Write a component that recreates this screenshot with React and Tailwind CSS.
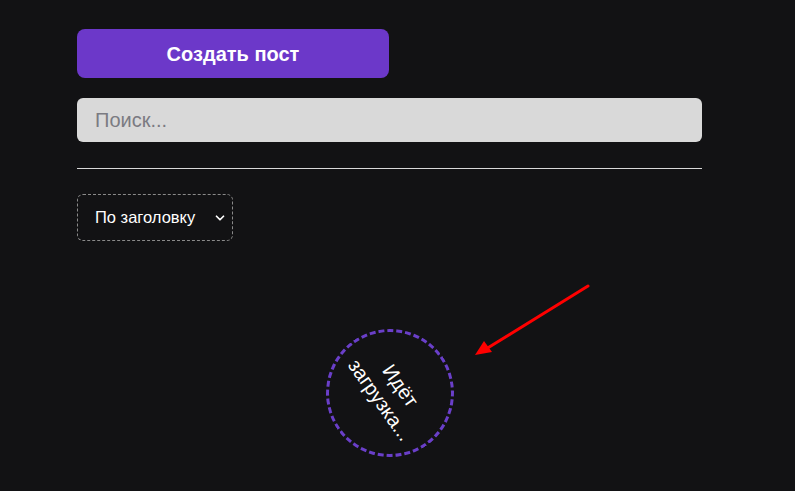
export default function App() {
  return (
    <div
      className="relative w-screen min-h-screen bg-[#121214] overflow-hidden"
      style={{ fontFamily: '"Liberation Sans", Arial, sans-serif' }}
    >
      <div className="w-[625px] ml-[77px] pt-[29px] flex flex-col">
        <button className="w-[312px] h-[49px] rounded-lg bg-[#6c38c9] text-white text-xl font-bold">
          Создать пост
        </button>

        <input
          placeholder="Поиск..."
          className="mt-[20px] h-[44px] w-full rounded-md bg-[#d9d9d9] px-[18px] text-xl text-gray-800 placeholder:text-[#7b7b82] outline-none"
        />

        <hr className="mt-[26px] border-0 border-t border-[#d9d9d9]" />

        <div className="mt-[25px] w-[156px] h-[47px] rounded-md border border-dashed border-[#8a8a8a] flex items-center justify-between pl-[17px] pr-[5px] text-white text-[16.5px]">
          <span>По заголовку</span>
          <svg width="14" height="14" viewBox="0 0 24 24" fill="none" stroke="white" strokeWidth="3" strokeLinecap="round" strokeLinejoin="round">
            <path d="M6 9l6 6 6-6" />
          </svg>
        </div>

        <div className="mt-[88px] flex justify-center">
          <div className="w-[128px] h-[128px] rounded-full border-[3px] border-dashed border-[#6a3fc9] flex items-center justify-center rotate-[55deg]">
            <p className="text-white text-xl leading-[25px] text-center w-[112px]">Идёт загрузка...</p>
          </div>
        </div>
      </div>

      <svg className="absolute left-0 top-0 pointer-events-none" width="795" height="491">
        <line x1="588" y1="286" x2="486" y2="349" stroke="#ff0000" strokeWidth="3" strokeLinecap="round" />
        <polygon points="475,355 484,341 492,352" fill="#ff0000" />
      </svg>
    </div>
  );
}
